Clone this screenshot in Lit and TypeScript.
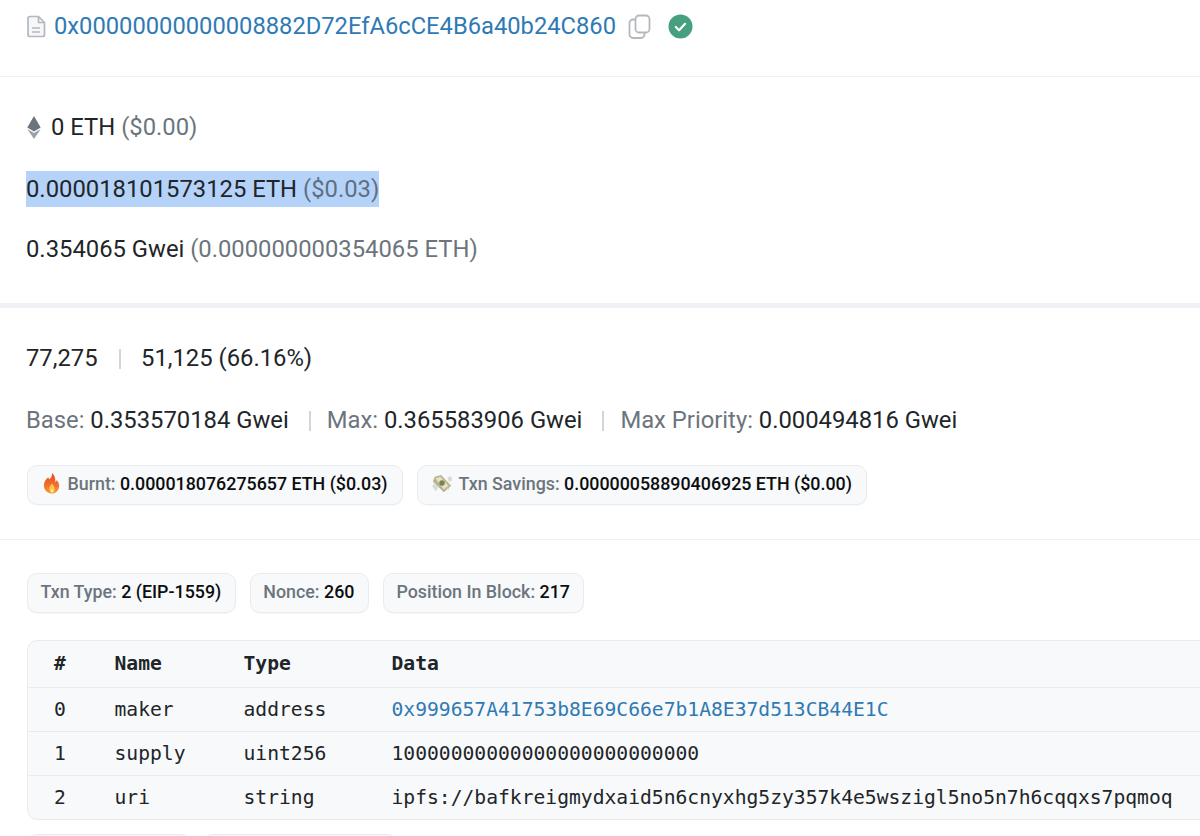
import { LitElement, html, css, svg } from "lit";
import { customElement } from "lit/decorators.js";

const fire = svg`<svg class="emoji fire" viewBox="0 0 20 24" width="19" height="23" aria-hidden="true">
  <defs>
    <linearGradient id="fg" x1="0" y1="0" x2="0" y2="1"><stop offset="0" stop-color="#e8452a"/><stop offset="0.6" stop-color="#f0722a"/><stop offset="1" stop-color="#f59a32"/></linearGradient>
  </defs>
  <path fill="url(#fg)" d="M10.5 1c.6 3.4-1.2 5-2.8 6.8-.6-.8-.8-1.6-.8-2.5C4 7.2 2 10 2 14.200c0 4.600 3.500 8.300 8 8.300s8-3.500 8-8c0-3-1.300-4.800-2.600-6.300-.1 1.100-.5 1.900-1.300 2.500C14.300 6.800 13.300 3 10.500 1z"/>
  <path fill="#fbc34a" d="M10.300 11.500c.2 1.800-2.800 3.200-2.800 6 0 2.200 1.300 4 3 4s3-1.600 3-3.700c0-2.600-1.700-3.500-3.200-6.300z"/>
  <path fill="#fde9b0" d="M10.500 17c.1 1-1 1.500-1 2.800 0 1 .5 1.700 1.200 1.700s1.200-.7 1.200-1.700c0-1.200-.9-1.700-1.400-2.800z"/>
</svg>`;

const money = svg`<svg class="emoji" viewBox="0 0 24 22" width="22" height="20" aria-hidden="true">
  <path fill="#d5dcd6" d="M1 13l4-2 3 4-3 4zM18 4l4-2 1 5-3 2z"/>
  <path fill="#aab49a" d="M4 3l7-2 11 12-8 7L2 8z"/>
  <path fill="#c4b981" d="M3 5l7-3 11 11-7 5z"/>
  <path fill="#e6e1c4" d="M5 5l5-2 9 10-5 4z"/>
  <circle cx="12" cy="10" r="3" fill="#7d8052"/>
  <path fill="#e3dca0" d="M2 9l3 1-1 2zM17 16l3-1-1 3z"/>
</svg>`;

@customElement("app-root")
export class AppRoot extends LitElement {
  static styles = css`
    :host {
      display: block;
      height: 836px;
      overflow: hidden;
      background: #fff;
      font-family: Roboto, "Liberation Sans", sans-serif;
      font-size: 23.8px;
      color: #212529;
    }
    .head {
      height: 52px;
      padding: 0 0 24px 27px;
      display: flex;
      align-items: center;
      border-bottom: 1px solid #eff1f3;
    }
    .file { margin-right: 8px; }
    .addr { color: #2f7ab5; font-size: 23.72px; }
    .copy { margin-left: 12px; }
    .ok { margin-left: 17px; }
    .fees {
      padding: 32px 0 36px 26px;
      display: flex;
      flex-direction: column;
      align-items: flex-start;
      gap: 25px;
      border-bottom: 5px solid #eff1f4;
    }
    .row {
      box-sizing: border-box;
      height: 36px;
      display: flex;
      align-items: center;
      white-space: pre;
    }
    .muted { color: #6c757d; }
    .eth { margin: 0 10px 0 1px; }
    .sel { background: #b5d3f9; margin: 1px 0 -1px; padding-bottom: 1px; }
    .sel .muted { color: #5f6f83; }
    .gas {
      padding: 32px 0 34px 26px;
      display: flex;
      flex-direction: column;
      gap: 26px;
      border-bottom: 1.5px solid #eff1f3;
    }
    .bar {
      width: 2px;
      height: 20px;
      background: #d2d6da;
      margin: 1px 20.5px 0 21px;
    }
    .bar.small { margin: 1px 16px 0 20px; }
    .pills { display: flex; gap: 14px; }
    .gas .pills { margin: 1px 0 0 1px; }
    .pill {
      box-sizing: border-box;
      height: 40px;
      padding: 0 14.5px 3px 12.5px;
      display: flex;
      align-items: center;
      white-space: pre;
      background: #f8f9fa;
      border: 1.5px solid #e9ecef;
      border-radius: 10px;
      box-shadow: 0 1px 1px rgba(0, 0, 0, 0.03);
      font-size: 17.84px;
      font-weight: 500;
      color: #6c757d;
    }
    .pill b { font-weight: 500; color: #0b0d0f; }
    .other .pill { padding-right: 13.5px; }
    .emoji { margin-right: 6px; flex: none; }
    .emoji.fire { margin: 0 7px 0 1px; }
    .other { padding: 33px 0 0 27px; display: flex; flex-direction: column; }
    .table {
      margin: 27px -40px 0 0;
      background: #f8f9fa;
      border: 1.5px solid #e9ecef;
      border-radius: 10px;
      font-family: "DejaVu Sans Mono", monospace;
      font-size: 19.66px;
      color: #212529;
    }
    .tr {
      box-sizing: border-box;
      height: 44px;
      display: grid;
      grid-template-columns: 60.5px 129px 148px 1fr;
      padding-left: 26px;
      align-items: center;
      white-space: pre;
      border-top: 1.5px solid #e9ecef;
    }
    .tr.th { height: 46px; padding-bottom: 2px; border-top: 0; font-weight: 700; }
    .link { color: #2f7ab5; }
    .more { margin-top: 14px; display: flex; gap: 10px; }
    .more .pill { width: 165px; }
    .more .pill + .pill { width: 196px; }
  `;

  render() {
    return html`
      <div class="head">
        <svg class="file" width="19" height="23" viewBox="0 0 19 23" fill="none" stroke="#b4b9be" stroke-width="1.700">
          <path d="M3 1.500h8.500l6 6V19.500a2 2 0 0 1-2 2H3a2 2 0 0 1-2-2V3.500a2 2 0 0 1 2-2z" fill="#f6f7f8"/>
          <path d="M11.500 1.500v6h6M5 13h8M5 17h8"/>
        </svg>
        <span class="addr">0x00000000000008882D72EfA6cCE4B6a40b24C860</span>
        <svg class="copy" width="23" height="25" viewBox="0 0 23 25" fill="none" stroke="#b4b9be" stroke-width="1.800">
          <rect x="7.500" y="1.500" width="14" height="17" rx="3.500"/>
          <path d="M7.500 5.500H5a3.500 3.500 0 0 0-3.500 3.500v11.500A3.500 3.500 0 0 0 5 24h8a3.500 3.500 0 0 0 3.500-3.500v-2"/>
        </svg>
        <svg class="ok" width="25" height="25" viewBox="0 0 25 25">
          <circle cx="12.500" cy="12.500" r="12" fill="#46a07f"/>
          <path d="M7.800 13l3.300 3.200 6-6.400" fill="none" stroke="#fff" stroke-width="2.200" stroke-linecap="round" stroke-linejoin="round"/>
        </svg>
      </div>

      <div class="fees">
        <div class="row">
          <svg class="eth" width="14" height="23" viewBox="0 0 14 23">
            <path d="M7 0L.3 11.500 7 15.500l6.700-4z" fill="#6c757d"/>
            <path d="M.3 13L7 23l6.700-10L7 17z" fill="#9aa1a8"/>
          </svg>
          <span>0 ETH <span class="muted">($0.00)</span></span>
        </div>
        <div class="row sel">0.000018101573125 ETH <span class="muted">($0.03)</span></div>
        <div class="row">0.354065 Gwei <span class="muted">(0.000000000354065 ETH)</span></div>
      </div>

      <div class="gas">
        <div class="row">77,275<span class="bar"></span>51,125 (66.16%)</div>
        <div class="row"><span class="muted">Base: </span>0.353570184 Gwei<span class="bar small"></span><span class="muted">Max: </span>0.365583906 Gwei<span class="bar small"></span><span class="muted">Max Priority: </span>0.000494816 Gwei</div>
        <div class="pills">
          <div class="pill">${fire}Burnt: <b>0.000018076275657 ETH ($0.03)</b></div>
          <div class="pill">${money}Txn Savings: <b>0.00000058890406925 ETH ($0.00)</b></div>
        </div>
      </div>

      <div class="other">
        <div class="pills">
          <div class="pill">Txn Type: <b>2 (EIP-1559)</b></div>
          <div class="pill">Nonce: <b>260</b></div>
          <div class="pill">Position In Block: <b>217</b></div>
        </div>
        <div class="table">
          <div class="tr th"><span>#</span><span>Name</span><span>Type</span><span>Data</span></div>
          <div class="tr"><span>0</span><span>maker</span><span>address</span><span class="link">0x999657A41753b8E69C66e7b1A8E37d513CB44E1C</span></div>
          <div class="tr"><span>1</span><span>supply</span><span>uint256</span><span>10000000000000000000000000</span></div>
          <div class="tr"><span>2</span><span>uri</span><span>string</span><span>ipfs://bafkreigmydxaid5n6cnyxhg5zy357k4e5wszigl5no5n7h6cqqxs7pqmoq</span></div>
        </div>
        <div class="more"><div class="pill"></div><div class="pill"></div></div>
      </div>
    `;
  }
}
